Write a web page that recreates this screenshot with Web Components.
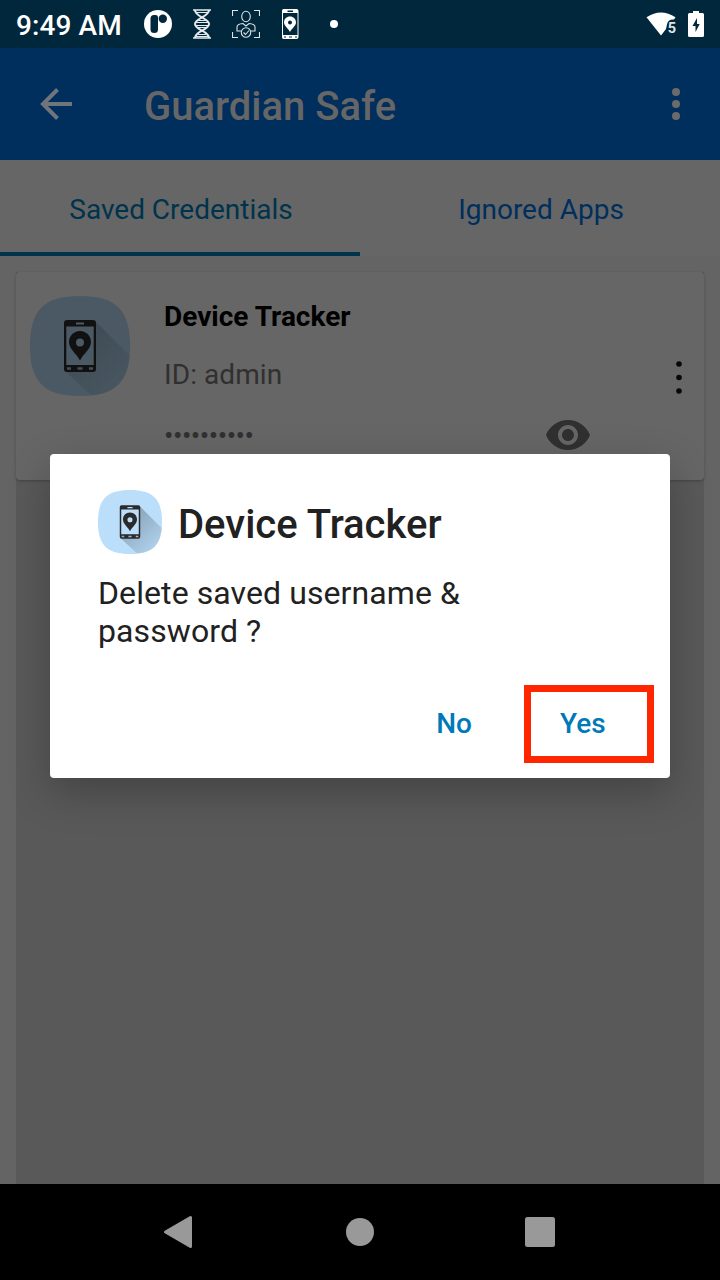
<!DOCTYPE html>
<html lang="en">
<head>
<meta charset="utf-8">
<title>Guardian Safe</title>
<style>
html,body{margin:0;height:100%}
body{font-family:Roboto,"Liberation Sans",sans-serif;background:#646464;overflow:hidden}
</style>
</head>
<body>
<safe-screen>
  <status-bar slot="status" time="9:49 AM"></status-bar>
  <app-bar slot="bar">Guardian Safe</app-bar>
  <tab-strip slot="tabs"><span slot="first">Saved Credentials</span><span slot="second">Ignored Apps</span></tab-strip>
  <credential-card><span slot="name">Device Tracker</span><span slot="user">ID: admin</span><span slot="secret">••••••••••</span></credential-card>
  <confirm-dialog slot="dialog"><span slot="title">Device Tracker</span><span slot="message">Delete saved username &amp; password ?</span><span slot="cancel">No</span><span slot="accept">Yes</span></confirm-dialog>
  <nav-bar slot="nav"></nav-bar>
</safe-screen>
<script>
const define = (name, html) => customElements.define(name, class extends HTMLElement {
  constructor() {
    super();
    this.attachShadow({mode: "open"}).innerHTML = html.replace("{time}", this.getAttribute("time") || "");
  }
});

define("tracker-icon", `
<style>:host{display:block;flex:none}svg{display:block;width:100%;height:100%}</style>
<svg viewBox="0 0 100 100">
<defs><linearGradient id="g" x1="40" y1="40" x2="85" y2="88" gradientUnits="userSpaceOnUse"><stop offset="0" stop-color="#263238" stop-opacity=".36"/><stop offset="1" stop-color="#263238" stop-opacity=".1"/></linearGradient>
<clipPath id="c"><path d="M50 0C86 0 100 14 100 50S86 100 50 100 0 86 0 50 14 0 50 0Z"/></clipPath></defs>
<path fill="var(--tile,#bbdefb)" d="M50 0C86 0 100 14 100 50S86 100 50 100 0 86 0 50 14 0 50 0Z"/>
<path clip-path="url(#c)" fill="url(#g)" d="M65 25L100 60V100H62L35 75Z"/>
<path fill="var(--tile,#bbdefb)" d="M36 29H64V70H36Z"/>
<path fill="var(--ink,#2a2a2a)" fill-rule="evenodd" d="M37 24H63Q66 24 66 27V73Q66 76 63 76H37Q34 76 34 73V27Q34 24 37 24ZM46 26.500V28.500H54V26.500ZM36.300 30.500V69H63.700V30.500ZM37 71.300V73.700H41V71.300ZM47.500 71.300V73.700H52.500V71.300ZM59 71.300V73.700H63V71.300Z"/>
<path fill="var(--ink,#2a2a2a)" fill-rule="evenodd" d="M50 35C43.500 35 39 40 39 46 39 53 47 58 50 64.500 53 58 61 53 61 46 61 40 56.500 35 50 35ZM50 42.500A4 4 0 1 1 50 50.500 4 4 0 0 1 50 42.500Z"/>
</svg>`);

define("status-bar", `
<style>
:host{display:flex;box-sizing:border-box;height:48px;background:#00273b;color:#fff;padding:0 16px;align-items:center}
.time{font-size:28px;font-weight:500;line-height:32px;width:128px;padding-top:4px;letter-spacing:.08px;white-space:nowrap}
svg{display:block;flex:none}.i{margin-right:16px}.sp{flex:1}
</style>
<div class="time">{time}</div>
<svg class="i" width="28" height="48" viewBox="144 0 28 48"><circle cx="158" cy="24" r="14" fill="#fff"/><path fill="#00273b" d="M150.500 18.500Q150.500 15 154 15H155.500Q158 15 158 17.500V29.500Q158 33 154.300 33 150.500 33 150.500 29.500Z"/><circle cx="162.800" cy="18.800" r="4.200" fill="#00273b"/></svg>
<svg class="i" width="28" height="48" viewBox="188 0 28 48" fill="none" stroke="#e5eaed" stroke-width="1.500"><path d="M193 10H211M193 38H211"/><path stroke-width="2" d="M195 10C195 17 209 18 209 24S195 31 195 38M209 10C209 17 195 18 195 24S209 31 209 38"/><path stroke-width="1" d="M196 12.500H208M198 20.500H206M196 22.500H208M196 25.500H208M198 27.500H206M198 34.500H206M196 36.500H208"/></svg>
<svg class="i" width="28" height="48" viewBox="232 0 28 48" fill="none" stroke="#dce3e7" stroke-width="1.100"><path d="M232.500 16V10.500H238M254 10.500H259.500V16M232.500 32V37.500H238M254 37.500H259.500V32"/><ellipse cx="246" cy="16.500" rx="4.300" ry="5.300"/><path d="M241 31H237V27Q237 24 243 23.500L246 26 249 23.500Q255 24 255 27V31H251"/><circle cx="246" cy="32.500" r="4.700"/><path d="M243.500 32.500L245.500 34.500 249 30.500"/></svg>
<svg class="i" width="28" height="48" viewBox="276 0 28 48"><path fill="#fff" fill-rule="evenodd" d="M283.500 9H296.500Q298.500 9 298.500 11V37Q298.500 39 296.500 39H283.500Q282 39 282 37V11Q282 9 283.500 9ZM287.500 10.500V12H293V10.500ZM283 13V35H297.500V13ZM284 36.500V37.500H286V36.500ZM289 36.500V37.500H292V36.500ZM295 36.500V37.500H297V36.500Z"/><path fill="#fff" fill-rule="evenodd" d="M290 16.500C286.500 16.500 284 19 284 22.500 284 26 288.500 28.500 290 32 291.500 28.500 296 26 296 22.500 296 19 293.500 16.500 290 16.500ZM290 20.500A2 2 0 1 1 290 24.500 2 2 0 0 1 290 20.500Z"/></svg>
<svg width="28" height="48" viewBox="320 0 28 48"><circle cx="334" cy="24" r="4" fill="#fff"/></svg>
<span class="sp"></span>
<svg width="60" height="48" viewBox="644 0 60 48"><path fill="#fff" d="M646.500 17.300Q661 7.500 675.500 17.300L674 19.500Q668 19 667 24.500L666 29 661 35.500Z"/><text x="667.800" y="33" font-size="14.500" font-weight="700" fill="#dfe5e8">5</text><path fill="#fff" fill-rule="evenodd" d="M693 11H699V13H702.500Q704 13 704 14.500V35.500Q704 37 702.500 37H689.500Q688 37 688 35.500V14.500Q688 13 689.500 13H693ZM697 18L692.500 26H695.500V32L699.700 24H697Z"/></svg>`);

define("app-bar", `
<style>
:host{display:flex;box-sizing:border-box;height:112px;background:#002e5d;color:#666;padding:0 28px 0 36px;align-items:center}
.t{font-size:40px;font-weight:500;line-height:48px;padding-top:6px;margin-left:68px;flex:1;white-space:nowrap}
svg{display:block;flex:none}
.back{filter:blur(.5px)}
</style>
<svg class="back" width="40" height="40" viewBox="36 84 40 40" fill="none" stroke="#70757b" stroke-width="4"><path d="M57.500 89.500L43 104 57.500 118.500M43 104H72"/></svg>
<div class="t"><slot></slot></div>
<svg width="32" height="40" viewBox="660 84 32 40" fill="#6b6b6b"><circle cx="676" cy="92" r="4"/><circle cx="676" cy="104" r="4"/><circle cx="676" cy="116" r="4"/></svg>`);

define("tab-strip", `
<style>
:host{display:grid;grid-template-columns:1fr 1fr;height:96px;background:#666;font-size:28px;line-height:32px;text-align:center;color:#002e5d}
div{box-sizing:border-box;padding:34px 0 0 2px;border-bottom:4px solid transparent;white-space:nowrap}
.on{color:#00334c;border-color:#00334c}
</style>
<div class="on"><slot name="first"></slot></div><div><slot name="second"></slot></div>`);

define("credential-card", `
<style>
:host{display:flex;box-sizing:border-box;height:208px;background:#666;border-radius:4px;padding:24px 0 0 14px;box-shadow:0 1px 3px rgba(0,0,0,.25);font-size:28px;line-height:32px}
tracker-icon{width:100px;height:100px;--tile:#4b5964;--ink:#111}
.b{margin-left:34px;width:380px;color:#303030;white-space:nowrap}
.n{font-weight:700;color:#000;padding-top:5px}
.u{padding-top:26px;letter-spacing:.08px}.s{padding-top:29px;letter-spacing:-.5px}
svg{display:block;flex:none}.eye{margin-top:115px}.more{margin:60px 0 0 72px}
</style>
<tracker-icon></tracker-icon>
<div class="b"><div class="n"><slot name="name"></slot></div><div class="u"><slot name="user"></slot></div><div class="s"><slot name="secret"></slot></div></div>
<svg class="eye" width="48" height="48" viewBox="0 0 24 24"><path fill="#303030" d="M12 4.500C7 4.500 2.730 7.610 1 12c1.730 4.390 6 7.500 11 7.500s9.270-3.110 11-7.500c-1.730-4.390-6-7.500-11-7.500zM12 17c-2.760 0-5-2.240-5-5s2.240-5 5-5 5 2.240 5 5-2.240 5-5 5zm0-8c-1.660 0-3 1.340-3 3s1.340 3 3 3 3-1.340 3-3-1.340-3-3-3z"/></svg>
<svg class="more" width="30" height="44" viewBox="664 356 30 44" fill="#080808"><circle cx="679" cy="364" r="2.800"/><circle cx="679" cy="377.500" r="2.800"/><circle cx="679" cy="391" r="2.800"/></svg>`);

define("confirm-dialog", `
<style>
:host{display:block;box-sizing:border-box;width:620px;height:324px;background:#fff;border-radius:4px;padding:36px 16px 0 48px;box-shadow:0 14px 40px rgba(0,0,0,.25);color:#212121}
.h{display:flex;align-items:center;height:64px;gap:16px;font-size:40px;font-weight:500;line-height:48px}
.h div{padding-top:6px;white-space:nowrap}
tracker-icon{width:64px;height:64px}
.m{font-size:32px;line-height:38px;letter-spacing:.09px;width:400px;margin-top:20px}
.a{display:flex;justify-content:flex-end;align-items:center;margin-top:35px;font-size:28px;font-weight:500;line-height:32px;color:#0079b8}
.n{margin-right:52px}
.y{box-sizing:border-box;width:130px;height:78px;border:7px solid #ff2600;padding:16px 0 0 29px}
</style>
<div class="h"><tracker-icon></tracker-icon><div><slot name="title"></slot></div></div>
<div class="m"><slot name="message"></slot></div>
<div class="a"><div class="n"><slot name="cancel"></slot></div><div class="y"><slot name="accept"></slot></div></div>`);

define("nav-bar", `
<style>:host{display:flex;height:96px;background:#000;justify-content:center;align-items:center;gap:132px}svg{display:block;width:48px;height:48px;fill:#999}</style>
<svg viewBox="156 1208 48 48"><path d="M190.500 1217.500V1246.500L165.500 1232Z" stroke="#999" stroke-width="3" stroke-linejoin="round"/></svg>
<svg viewBox="336 1208 48 48"><circle cx="360" cy="1232" r="14"/></svg>
<svg viewBox="516 1208 48 48"><rect x="525" y="1217" width="30" height="30" rx="2.500"/></svg>`);

define("safe-screen", `
<style>
:host{display:flex;flex-direction:column;position:relative;width:720px;height:1280px;overflow:hidden;background:#646464}
main{flex:1;box-sizing:border-box;padding:16px 16px 0;display:flex}
.list{flex:1;background:#595959}
.over{position:absolute;left:50px;top:454px}
</style>
<slot name="status"></slot><slot name="bar"></slot><slot name="tabs"></slot>
<main><div class="list"><slot></slot></div></main>
<div class="over"><slot name="dialog"></slot></div>
<slot name="nav"></slot>`);
</script>
</body>
</html>
